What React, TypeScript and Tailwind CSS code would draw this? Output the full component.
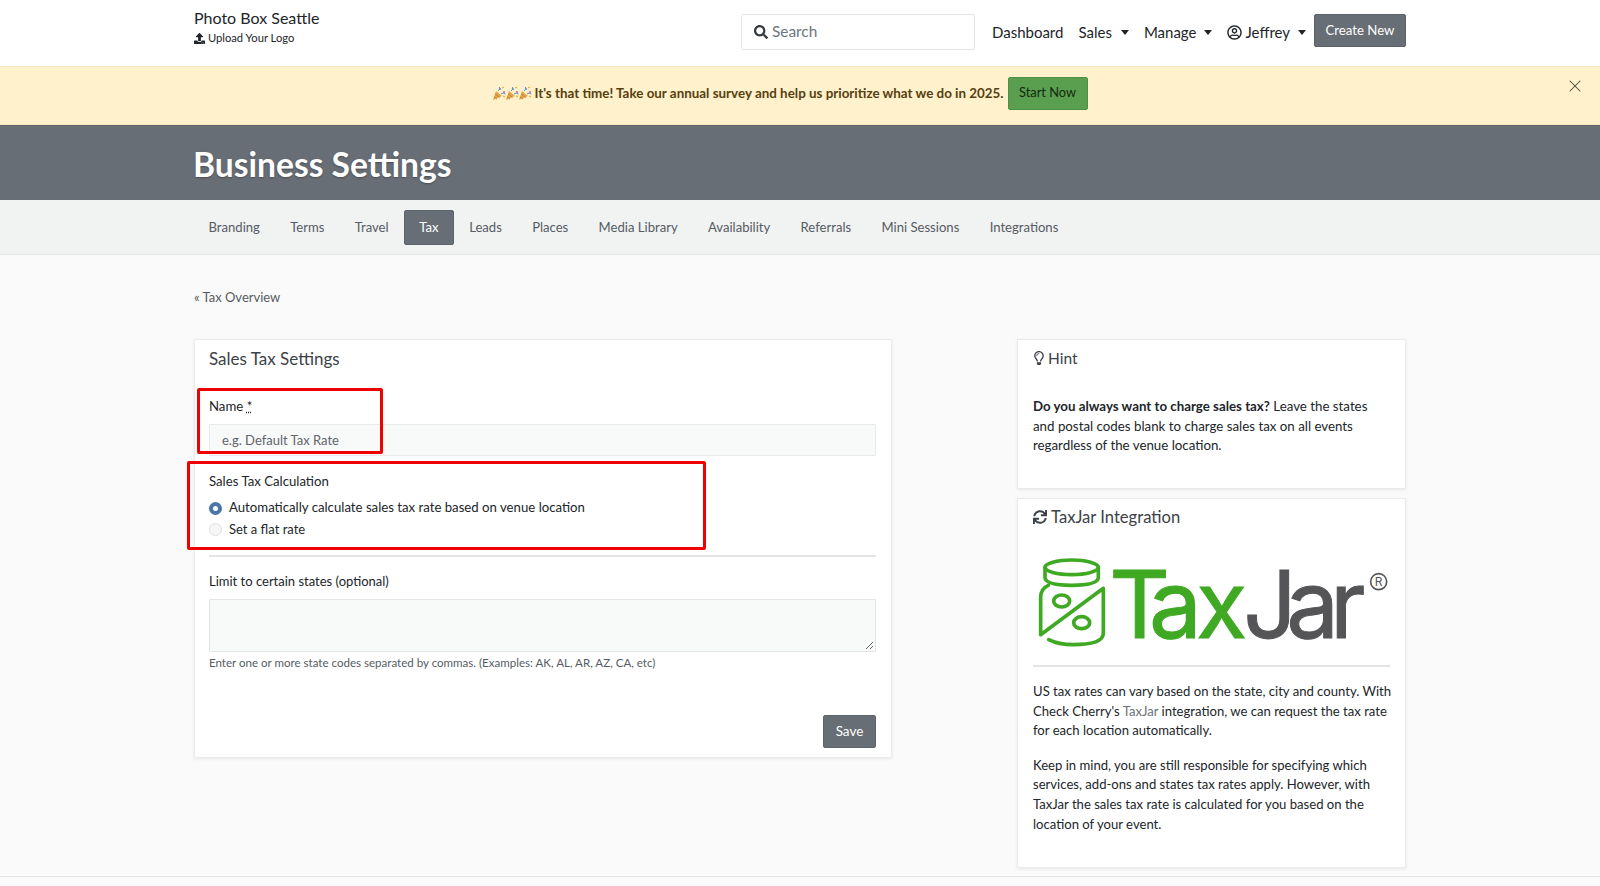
import React from 'react';
import { FaSearch, FaUpload, FaRegUserCircle, FaSync, FaRegLightbulb } from 'react-icons/fa';
import { X } from 'lucide-react';

const tabs = ['Branding', 'Terms', 'Travel', 'Tax', 'Leads', 'Places', 'Media Library', 'Availability', 'Referrals', 'Mini Sessions', 'Integrations'];

const Caret = () => (
  <span className="ml-[8px] inline-block w-0 h-0 border-x-[4.5px] border-x-transparent border-t-[5px] border-t-[#212529] align-[3px]" />
);

// the little party popper from the banner, no emoji font in the sandbox
const Popper = () => (
  <svg width="14" height="15" viewBox="0 0 14 15" className="-mr-[1px]">
    <path d="M1 14 L4 5 L10 10 Z" fill="#e3a44a" />
    <path d="M3 8 L7.5 11.5 M2 11 L5 13" stroke="#c9802f" strokeWidth="1" />
    <circle cx="8" cy="3" r="1" fill="#5b8fd0" />
    <circle cx="12" cy="6" r="1" fill="#d9628a" />
    <path d="M6 5 Q8 4 7.5 1 M9 8 Q11 6 13.5 8" stroke="#5b8fd0" strokeWidth="1" fill="none" />
    <path d="M10 2 L12 1 M11 10 L13 11" stroke="#e2b23c" strokeWidth="1.2" />
  </svg>
);

const TaxJarLogo = () => (
  <svg width="360" height="117" viewBox="60 165 1080 351" className="block">
    <g fill="none" stroke="#3fa924" strokeWidth="11" strokeLinecap="round" strokeLinejoin="round">
      <ellipse cx="185" cy="232" rx="80" ry="22" />
      <path d="M105 232 V262 Q105 286 185 286 Q265 286 265 262 V232" />
      <path d="M115 286 Q92 296 92 322 V434 L280 295 V430 Q280 464 190 464 Q145 464 116 449" />
      <ellipse cx="155" cy="333" rx="24" ry="18" />
      <ellipse cx="215" cy="398" rx="24" ry="18" />
    </g>
    <text x="298 417 558" y="443" fontFamily="Inter, sans-serif" fontWeight="400" fontSize="282" fill="#3fa924" stroke="#3fa924" strokeWidth="3">Tax</text>
    <text x="700 829 960" y="443" fontFamily="Inter, sans-serif" fontWeight="400" fontSize="282" fill="#555558" stroke="#555558" strokeWidth="3">Jar</text>
    <circle cx="1106" cy="275" r="24" fill="none" stroke="#555558" strokeWidth="5" />
    <text x="1106" y="288" textAnchor="middle" fontFamily="Inter, sans-serif" fontSize="36" fill="#555558">R</text>
  </svg>
);

const App = () => {
  return (
    <div className="relative h-[886px] overflow-hidden bg-[#fafafa] font-['Lato',sans-serif] text-[13.2px] text-[#212529]">
      {/* top nav */}
      <header className="h-[66px] bg-white">
        <div className="w-[1212px] mx-auto h-full flex justify-between">
          <div className="pt-[8px]">
            <div className="text-[16px] leading-[20px] text-[#212529]">Photo Box Seattle</div>
            <div className="mt-[2px] flex items-center gap-[3px] text-[11.2px] leading-[16px]">
              <FaUpload size={11} /> Upload Your Logo
            </div>
          </div>
          <div className="flex pt-[14px] items-start">
            <div className="w-[234px] h-[36px] border border-[#e3e5e8] rounded-[2px] flex items-center pl-[12px] gap-[4px] text-[15.4px] text-[#6c757d]">
              <FaSearch size={14} className="text-[#343a40]" /> Search
            </div>
            <nav className="flex items-center h-[36px] ml-[17px] gap-[15px] text-[15px] pt-[1px]">
              <span>Dashboard</span>
              <span>Sales<span className="ml-[1px]"><Caret /></span></span>
              <span>Manage<Caret /></span>
              <span className="flex items-center">
                <FaRegUserCircle size={15} className="mr-[3px]" />
                <span>Jeffrey<Caret /></span>
              </span>
            </nav>
            <button className="ml-[8px] w-[92px] h-[33px] bg-[#686e76] border border-[#5c6269] rounded-[2px] text-white text-[13.2px]">Create New</button>
          </div>
        </div>
      </header>

      {/* survey banner */}
      <div className="relative h-[59px] bg-[#fff1cb] border-y border-[#f9e9bd] flex items-center justify-center pr-[20px] pb-[5px] text-[13.4px] font-bold text-[#574010]">
        <span className="flex mr-[3px]"><Popper /><Popper /><Popper /></span>
        It's that time! Take our annual survey and help us prioritize what we do in 2025.
        <button className="ml-[4px] w-[80px] h-[33px] bg-[#5a9e50] border border-[#4f9046] rounded-[2px] text-[#12290c] text-[12.8px] font-normal">Start Now</button>
        <X size={20} strokeWidth={1.25} className="absolute right-[15px] top-[9px] text-[#4b4b42]" />
      </div>

      <div className="h-[75px] bg-[#686e76] border-t border-[#5e646b]">
        <h1 className="w-[1212px] mx-auto pt-[17px] text-[33.6px] leading-[42px] font-bold text-white [text-shadow:0_1px_2px_rgba(0,0,0,0.3)]"><span className="-ml-[1px]">Business Settings</span></h1>
      </div>

      {/* tabs */}
      <div className="h-[55px] bg-[#f1f2f2] border-b border-[#e4e5e6]">
        <div className="w-[1212px] mx-auto pt-[10px] flex text-[13.1px] text-[#565c63]">
          {tabs.map((tab) => (
            <span
              key={tab}
              className={
                tab === 'Tax'
                  ? 'h-[35px] px-[14.5px] flex items-center bg-[#686e76] border border-[#5e646b] rounded-[2px] text-white'
                  : 'h-[35px] px-[15.15px] flex items-center first:pl-[14.5px]'
              }
            >
              {tab}
            </span>
          ))}
        </div>
      </div>

      <main className="w-[1212px] mx-auto">
        <div className="pt-[33px] h-[84px] text-[13px] leading-[18px] text-[#565c63]">« Tax Overview</div>

        <div className="flex justify-between items-start">
          {/* left card */}
          <section className="w-[698px] h-[419px] bg-white border border-[#ebebeb] shadow-[0_1px_3px_rgba(0,0,0,0.08)] pl-[14px] pr-[15px] flex flex-col">
            <h2 className="pt-[9px] text-[17px] leading-[20px] text-[#3c4248]">Sales Tax Settings</h2>
            <label className="mt-[28px] leading-[18px]">
              Name <span className="underline decoration-dotted">*</span>
            </label>
            <div className="mt-[9px] h-[32px] bg-[#f8f9f9] border border-[#e8e9e9] rounded-[1px] pl-[12px] pt-[1px] flex items-center text-[13px] text-[#5f656b]">e.g. Default Tax Rate</div>
            <label className="mt-[16px] leading-[18px]">Sales Tax Calculation</label>
            <div className="mt-[7px] h-[22px] flex items-center gap-[7px]">
              <span className="w-[13px] h-[13px] rounded-full bg-white border-[4px] border-[#4a76a8]" />
              Automatically calculate sales tax rate based on venue location
            </div>
            <div className="h-[21px] flex items-center gap-[7px] text-[13px]">
              <span className="w-[13px] h-[13px] rounded-full bg-[#f6f6f6] border border-[#dfdfdf]" />
              Set a flat rate
            </div>
            <div className="mt-[15px] border-t-2 border-[#e3e4e4]" />
            <label className="mt-[15px] text-[13px] leading-[18px]">Limit to certain states (optional)</label>
            <div className="relative mt-[9px] h-[53px] bg-[#f8f9f9] border border-[#e4e5e5] rounded-[1px]">
              <svg width="9" height="9" viewBox="0 0 9 9" className="absolute right-[1px] bottom-[1px]">
                <path d="M1 8 L8 1 M5 8 L8 5" stroke="#666" strokeWidth="1" />
              </svg>
            </div>
            <p className="mt-[3px] text-[11.55px] leading-[16px] text-[#565c63]">Enter one or more state codes separated by commas. (Examples: AK, AL, AR, AZ, CA, etc)</p>
            <div className="mt-[44px] flex justify-end">
              <button className="w-[53px] h-[33px] bg-[#686e76] border border-[#5e646b] rounded-[2px] text-white text-[13.5px]">Save</button>
            </div>
          </section>

          {/* right column */}
          <aside className="w-[389px] flex flex-col gap-[9px]">
            <section className="h-[150px] bg-white border border-[#ebebeb] shadow-[0_1px_3px_rgba(0,0,0,0.08)] pl-[15px] pr-[26px]">
              <h2 className="pt-[8px] flex items-center gap-[2px] text-[15.5px] leading-[20px] text-[#3c4248]">
                <FaRegLightbulb size={14} className="-ml-[1px]" /> Hint
              </h2>
              <p className="mt-[29px] text-[13.3px] leading-[19.6px]">
                <strong>Do you always want to charge sales tax?</strong> Leave the states and postal codes blank to charge sales tax on all events regardless of the venue location.
              </p>
            </section>
            <section className="h-[370px] bg-white border border-[#ebebeb] shadow-[0_1px_3px_rgba(0,0,0,0.08)] pl-[15px] pr-[11px]">
              <h2 className="pt-[8px] flex items-center gap-[4px] text-[16.6px] leading-[20px] text-[#3c4248]">
                <FaSync size={14} /> TaxJar Integration
              </h2>
              <div className="-mt-[7px] -mb-[11px] -ml-[3px] pt-[25px]"><TaxJarLogo /></div>
              <div className="mt-[14px] mr-[4px] border-t-2 border-[#e3e4e4]" />
              <p className="mt-[15px] text-[13.1px] leading-[19.6px]">
                US tax rates can vary based on the state, city and county. With Check Cherry's <span className="text-[#6b7178]">TaxJar</span> integration, we can request the tax rate for each location automatically.
              </p>
              <p className="mt-[15px] text-[13.1px] leading-[19.6px]">
                Keep in mind, you are still responsible for specifying which services, add-ons and states tax rates apply. However, with TaxJar the sales tax rate is calculated for you based on the location of your event.
              </p>
            </section>
          </aside>
        </div>
      </main>

      <div className="absolute left-0 right-0 top-[876px] h-[10px] border-t border-[#e4e5e6] bg-[#fbfbfb]" />

      {/* red annotation boxes drawn over the screenshot */}
      <div className="absolute left-[197px] top-[388px] w-[186px] h-[66px] border-[3px] border-[#f00000] rounded-[2px]" />
      <div className="absolute left-[187px] top-[461px] w-[519px] h-[89px] border-[3px] border-[#f00000] rounded-[2px]" />
    </div>
  );
};

export default App;
